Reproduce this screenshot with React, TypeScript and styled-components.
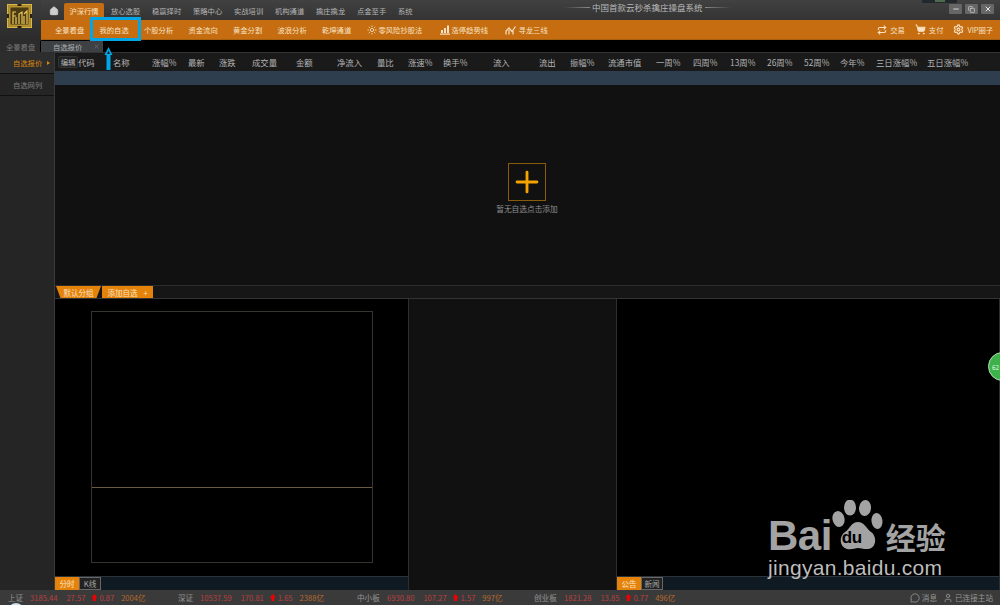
import React from "react";
import styled, { createGlobalStyle } from "styled-components";
import { Home, Sun, ShoppingCart, Settings, MessageCircle, User, Repeat, Minus, Copy, X, Plus } from "lucide-react";

const mainNav = ["放心选股", "稳赢择时", "策略中心", "实战培训", "机构通道", "擒庄擒龙", "点金至手", "系统"];
const subNav = ["全景看盘", "我的自选", "个股分析", "资金流向", "黄金分割", "波浪分析", "乾坤通道"];

const columns: [string, number][] = [
  ["代码", 35], ["名称", 39], ["涨幅%", 36], ["最新", 31], ["涨跌", 33], ["成交量", 44], ["金额", 41],
  ["净流入", 40], ["量比", 31], ["涨速%", 35], ["换手%", 50], ["流入", 46], ["流出", 31], ["振幅%", 38],
  ["流通市值", 48], ["一周%", 37], ["四周%", 37], ["13周%", 37], ["26周%", 37], ["52周%", 36], ["今年%", 36],
  ["三日涨幅%", 51], ["五日涨幅%", 50],
];

const indexes = [
  { name: "上证", width: 22, price: "3185.44", change: "27.57", pct: "0.87", amount: "2004亿", total: 170 },
  { name: "深证", width: 22, price: "10537.59", change: "170.81", pct: "1.65", amount: "2388亿", total: 179 },
  { name: "中小板", width: 30, price: "6930.80", change: "107.27", pct: "1.57", amount: "997亿", total: 177 },
  { name: "创业板", width: 30, price: "1821.28", change: "13.85", pct: "0.77", amount: "496亿", total: 150 },
];

const GlobalStyle = createGlobalStyle`
  html, body {
    margin: 0;
    padding: 0;
    background: #000;
    overflow: hidden;
  }
  * {
    box-sizing: border-box;
  }
  body {
    font-family: "Noto Sans CJK SC", "Liberation Sans", sans-serif;
  }
`;

const Page = styled.div`
  position: relative;
  width: 1000px;
  height: 605px;
  display: flex;
  flex-direction: column;
  overflow: hidden;
  background: #000;
`;

const Header = styled.header`
  display: flex;
  height: 41px;
  background: #000;
`;

const LogoCell = styled.div`
  width: 41px;
  height: 41px;
  flex: none;
  padding: 4px 0 0 7px;
  background: linear-gradient(#3d3d3d, #2b2b2b);
`;

const HeaderRight = styled.div`
  flex: 1;
  display: flex;
  flex-direction: column;
`;

const TitleBar = styled.div`
  position: relative;
  height: 20px;
  display: flex;
  align-items: flex-end;
  padding-left: 3px;
  background: linear-gradient(#414141, #333);
`;

const HomeTab = styled.div`
  width: 20px;
  height: 19px;
  display: flex;
  align-items: center;
  justify-content: center;
  color: #cfcfcf;
`;

const MainItem = styled.div<{ $active?: boolean }>`
  width: ${(p) => (p.$active ? "40px" : "41px")};
  height: 17px;
  margin-right: ${(p) => (p.$active ? "7px" : "0")};
  padding-bottom: 2px;
  display: flex;
  align-items: center;
  justify-content: ${(p) => (p.$active ? "center" : "flex-start")};
  font-size: 7.3px;
  color: ${(p) => (p.$active ? "#fbe3c3" : "#b5b5b5")};
  background: ${(p) => (p.$active ? "#c56d12" : "transparent")};
  border-radius: 2px 2px 0 0;
`;

const Title = styled.div`
  position: absolute;
  left: 523px;
  top: 1px;
  display: flex;
  align-items: center;
  gap: 2px;
  font-size: 8.5px;
  color: #b9b9b9;
`;

const TitleLine = styled.span<{ $flip?: boolean }>`
  width: 26px;
  height: 1px;
  background: linear-gradient(${(p) => (p.$flip ? "to left" : "to right")}, transparent, #8a8a8a);
`;

const WindowButtons = styled.div`
  position: absolute;
  right: 6px;
  top: 4px;
  display: flex;
  gap: 3px;
`;

const WindowButton = styled.div`
  width: 13px;
  height: 10px;
  display: flex;
  align-items: center;
  justify-content: center;
  border-radius: 1px;
  color: #e8e8e8;
  background: #666;
`;

const TopNotch = styled.div`
  position: absolute;
  right: 2px;
  top: 0;
  width: 35px;
  height: 3px;
  margin-right: 41px;
  display: flex;
  justify-content: center;
  background: #23282c;
`;

const NotchLight = styled.span`
  width: 10px;
  height: 2px;
  background: #4d6b4d;
`;

const OrangeWrap = styled.div`
  height: 20px;
  display: flex;
  align-items: center;
  background: #c56d10;
  padding-left: 14px;
  border-bottom: 1px solid #a8610f;
`;

const SubItem = styled.div`
  width: 44.5px;
  font-size: 7.3px;
  color: #f8e2c3;
  white-space: nowrap;
`;

const IconItem = styled.div<{ $width?: number }>`
  width: ${(p) => p.$width ?? 60}px;
  display: flex;
  align-items: center;
  gap: 2px;
  font-size: 7.3px;
  color: #f8e2c3;
  white-space: nowrap;
`;

const ToolRight = styled.div`
  margin-left: auto;
  padding-right: 7px;
  display: flex;
  align-items: center;
  gap: 10px;
`;

const ToolItem = styled.div`
  display: flex;
  align-items: center;
  gap: 3px;
  font-size: 7.3px;
  color: #f8e2c3;
`;

const TabRow = styled.div`
  height: 11px;
  display: flex;
  gap: 1px;
  background: #000;
`;

const Tab = styled.div<{ $active?: boolean }>`
  position: relative;
  width: ${(p) => (p.$active ? "62px" : "40px")};
  height: 11px;
  display: flex;
  align-items: center;
  padding-left: ${(p) => (p.$active ? "12px" : "6px")};
  font-size: 7.3px;
  color: ${(p) => (p.$active ? "#b0b0b0" : "#7a7a7a")};
  background: ${(p) => (p.$active ? "#3d4144" : "#2c2c2c")};
`;

const TabClose = styled.span`
  position: absolute;
  right: 3px;
  top: 2px;
  display: flex;
  color: #777;
`;

const Body = styled.div`
  flex: 1;
  min-height: 0;
  display: flex;
`;

const Sidebar = styled.aside`
  width: 55px;
  flex: none;
  background: #252525;
  border-right: 1px solid #3a3a3a;
`;

const SideItem = styled.div<{ $active?: boolean }>`
  height: 22px;
  display: flex;
  align-items: center;
  padding-left: 13px;
  gap: 5px;
  font-size: 7.3px;
  color: ${(p) => (p.$active ? "#d9860f" : "#7d7d7d")};
  background: ${(p) => (p.$active ? "#2d2d2d" : "transparent")};
  border-bottom: 1px solid #111;
`;

const SideMark = styled.span`
  width: 0;
  height: 0;
  border-left: 3px solid #d9860f;
  border-top: 2px solid transparent;
  border-bottom: 2px solid transparent;
`;

const Content = styled.main`
  flex: 1;
  min-width: 0;
  display: flex;
  flex-direction: column;
`;

const TableHead = styled.div`
  height: 19px;
  display: flex;
  align-items: center;
  background: #1a1a1a;
  border-top: 1px solid #333;
`;

const EditButton = styled.div`
  width: 20px;
  height: 12px;
  margin-left: 3px;
  display: flex;
  align-items: center;
  justify-content: center;
  flex: none;
  font-size: 7.3px;
  color: #b8b8b8;
  background: #222;
  border: 1px solid #333;
  border-radius: 2px;
`;

const HeadCell = styled.div<{ $width: number }>`
  width: ${(p) => p.$width}px;
  flex: none;
  font-size: 8.4px;
  color: #b4b4b4;
  white-space: nowrap;
`;

const SelectedRow = styled.div`
  height: 14px;
  background: #2e3e4e;
`;

const EmptyArea = styled.div`
  height: 200px;
  padding: 78px 1px 0 0;
  display: flex;
  flex-direction: column;
  align-items: center;
  gap: 2px;
  background: #111;
`;

const AddBox = styled.div`
  width: 38px;
  height: 38px;
  display: flex;
  align-items: center;
  justify-content: center;
  color: #f5a300;
  border: 1px solid #8a5c0a;
`;

const EmptyText = styled.div`
  font-size: 7.7px;
  color: #8f8f8f;
`;

const GroupBar = styled.div`
  height: 14px;
  display: flex;
  gap: 1px;
  padding-left: 1px;
  background: #161616;
  border-top: 1px solid #2c2c2c;
  border-bottom: 1px solid #333;
`;

const GroupTab = styled.div`
  width: 45px;
  height: 12px;
  display: flex;
  align-items: center;
  justify-content: center;
  font-size: 7.5px;
  color: #f9e3c4;
  background: #e5820a;
  clip-path: polygon(0 0, 100% 0, 90% 100%, 10% 100%);
`;

const AddTab = styled.div`
  width: 51px;
  height: 12px;
  display: flex;
  align-items: center;
  justify-content: center;
  gap: 6px;
  font-size: 7.5px;
  color: #f9e3c4;
  background: #e5820a;
`;

const Panels = styled.div`
  flex: 1;
  min-height: 0;
  display: flex;
`;

const Panel = styled.section<{ $width: number }>`
  width: ${(p) => p.$width}px;
  flex: none;
  display: flex;
  flex-direction: column;
  border-right: 1px solid #2a2f33;
`;

const MiddlePanel = styled.section`
  width: 208px;
  flex: none;
  background: #111;
  border-right: 1px solid #2a2f33;
`;

const PanelBody = styled.div`
  flex: 1;
  min-height: 0;
  background: #000;
`;

const ChartArea = styled(PanelBody)`
  padding: 12px 35px 13px 36px;
`;

const ChartFrame = styled.div`
  height: 100%;
  display: flex;
  flex-direction: column;
  border: 1px solid #37332e;
`;

const ChartTop = styled.div`
  height: 176px;
  border-bottom: 1px solid #6a5a40;
`;

const PanelTabs = styled.div`
  height: 14px;
  display: flex;
  background: #0f1a22;
  border-top: 1px solid #2b3238;
`;

const PanelTab = styled.div<{ $active?: boolean }>`
  width: ${(p) => (p.$active ? "24px" : "22px")};
  height: 13px;
  display: flex;
  align-items: center;
  justify-content: center;
  font-size: 7.6px;
  color: ${(p) => (p.$active ? "#fbe6c8" : "#a5a5a5")};
  background: ${(p) => (p.$active ? "#e5820a" : "#222")};
  border: ${(p) => (p.$active ? "none" : "1px solid #666")};
`;

const StatusBar = styled.footer`
  height: 15px;
  display: flex;
  align-items: center;
  padding-left: 8px;
  font-size: 7.6px;
  background: #3a3a3a;
`;

const IndexGroup = styled.div<{ $width: number }>`
  width: ${(p) => p.$width}px;
  flex: none;
  display: flex;
  align-items: center;
  white-space: nowrap;
`;

const IndexName = styled.span<{ $width: number }>`
  width: ${(p) => p.$width}px;
  flex: none;
  color: #959595;
`;

const Red = styled.span<{ $gap: number }>`
  margin-right: ${(p) => p.$gap}px;
  color: #b93f3f;
`;

const Pct = styled.span`
  display: flex;
  align-items: center;
  gap: 2px;
  margin-right: 7px;
  color: #b93f3f;
`;

const UpArrow = styled.span`
  width: 6px;
  height: 7px;
  background: #f00000;
  clip-path: polygon(50% 0, 100% 50%, 75% 50%, 75% 100%, 25% 100%, 25% 50%, 0 50%);
`;

const Amount = styled.span`
  color: #b5682c;
`;

const StatusRight = styled.div`
  margin-left: auto;
  padding-right: 7px;
  display: flex;
  align-items: center;
  gap: 6px;
  color: #959595;
`;

const StatusItem = styled.span`
  display: flex;
  align-items: center;
  gap: 2px;
`;

const Highlight = styled.div`
  position: absolute;
  left: 90px;
  top: 17px;
  width: 51px;
  height: 24px;
  border: 3px solid #00a6e6;
`;

const ArrowMark = styled.svg`
  position: absolute;
  left: 103px;
  top: 46px;
`;

const Bubble = styled.div`
  position: absolute;
  left: 988px;
  top: 352px;
  width: 29px;
  height: 29px;
  padding-left: 3px;
  display: flex;
  align-items: center;
  font-size: 6.5px;
  color: #dff5df;
  background: #3eb24a;
  border: 1px solid #b6dcb6;
  border-radius: 50%;
`;

const Cursor = styled.div`
  position: absolute;
  left: 8px;
  top: 603px;
  width: 16px;
  height: 16px;
  background: #cfe0ea;
  border-radius: 50%;
`;

const Watermark = styled.div`
  position: absolute;
  left: 768px;
  top: 500px;
  width: 190px;
  color: #a3a3a3;
  pointer-events: none;
`;

const WatermarkTop = styled.div`
  display: flex;
  align-items: flex-end;
  height: 53px;
  font-family: "Liberation Sans", sans-serif;
  font-weight: 700;
`;

const BaiText = styled.span`
  font-size: 42px;
  line-height: 34px;
  letter-spacing: -0.5px;
`;

const PawWrap = styled.span`
  position: relative;
  width: 52px;
  height: 53px;
  flex: none;
`;

const DuText = styled.span`
  position: absolute;
  left: 10px;
  top: 29px;
  font-size: 17px;
  line-height: 18px;
  letter-spacing: -0.5px;
  color: #000;
`;

const JingText = styled.span`
  font-family: "Noto Sans CJK SC", sans-serif;
  font-size: 30px;
  line-height: 34px;
  font-weight: 700;
  margin-left: 2px;
  white-space: nowrap;
`;

const WatermarkUrl = styled.div`
  margin-top: 3px;
  font-family: "Liberation Sans", sans-serif;
  font-size: 21px;
  line-height: 24px;
  letter-spacing: 0.3px;
  color: #bdbdbd;
`;

const Logo = () => (
  <svg width="25" height="24" viewBox="0 0 25 24">
    <rect x="0.5" y="0.5" width="24" height="23" fill="#a88a2a" stroke="#d8b648" />
    <rect x="3" y="3" width="19" height="18" fill="#4a3b14" stroke="#c9a43c" strokeWidth="0.8" />
    <path d="M6 20V8h3M6 12h3M9 20v-7M12 20V10l3-2v12M17 20v-8M20 20V7l-3 3" fill="none" stroke="#ecc95a" strokeWidth="1.2" />
    <rect x="10.5" y="0" width="4" height="2" fill="#2a2110" />
    <rect x="10.5" y="22" width="4" height="2" fill="#2a2110" />
    <rect x="0" y="10" width="2" height="4" fill="#2a2110" />
    <rect x="23" y="10" width="2" height="4" fill="#2a2110" />
  </svg>
);

const BarsIcon = () => (
  <svg width="10" height="10" viewBox="0 0 10 10" fill="#f8e2c3">
    <rect x="0" y="8.5" width="10" height="1.2" />
    <rect x="1" y="5" width="2" height="3" />
    <rect x="4" y="3" width="2" height="5" />
    <rect x="7" y="0.5" width="2" height="7.5" />
  </svg>
);

const TrendIcon = () => (
  <svg width="12" height="10" viewBox="0 0 12 10" fill="none" stroke="#f8e2c3" strokeWidth="1.2">
    <path d="M1 9.5V6l3-3 3 3.5L10.5 1.5" />
    <path d="M4 9.5V5M8 9.5V6" />
  </svg>
);

const Paw = () => (
  <svg width="52" height="53" viewBox="0 0 52 53" fill="#a3a3a3">
    <ellipse cx="6.5" cy="19" rx="6" ry="8" transform="rotate(-12 6.5 19)" />
    <ellipse cx="18" cy="7.5" rx="6" ry="8" />
    <ellipse cx="33" cy="8" rx="6" ry="8" transform="rotate(6 33 8)" />
    <ellipse cx="45" cy="21" rx="5.5" ry="8" transform="rotate(-8 45 21)" />
    <path d="M26 22c6 0 8 6 13 10 6 4 6 16-3 17-4 .5-7-1-10-1s-6 2-11 1c-8-2-8-13-2-17 5-3 6-10 13-10z" />
  </svg>
);

export default function App() {
  return (
    <Page>
      <GlobalStyle />
      <Header>
        <LogoCell>
          <Logo />
        </LogoCell>
        <HeaderRight>
          <TitleBar>
            <HomeTab>
              <Home size={10} fill="#cfcfcf" strokeWidth={1.5} />
            </HomeTab>
            <MainItem $active>沪深行情</MainItem>
            {mainNav.map((item) => (
              <MainItem key={item}>{item}</MainItem>
            ))}
            <Title>
              <TitleLine />
              中国首款云秒杀擒庄操盘系统
              <TitleLine $flip />
            </Title>
            <TopNotch>
              <NotchLight />
            </TopNotch>
            <WindowButtons>
              <WindowButton>
                <Minus size={8} strokeWidth={2.5} />
              </WindowButton>
              <WindowButton>
                <Copy size={7} strokeWidth={2} />
              </WindowButton>
              <WindowButton>
                <X size={8} strokeWidth={3} />
              </WindowButton>
            </WindowButtons>
          </TitleBar>
          <OrangeWrap>
            {subNav.map((item) => (
              <SubItem key={item}>{item}</SubItem>
            ))}
            <IconItem $width={73}>
              <Sun size={10} />
              零风险抄股法
            </IconItem>
            <IconItem $width={65}>
              <BarsIcon />
              涨停趋势线
            </IconItem>
            <IconItem $width={60}>
              <TrendIcon />
              寻龙三线
            </IconItem>
            <ToolRight>
              <ToolItem>
                <Repeat size={10} strokeWidth={2.5} />
                交易
              </ToolItem>
              <ToolItem>
                <ShoppingCart size={11} fill="#f8e2c3" />
                支付
              </ToolItem>
              <ToolItem>
                <Settings size={11} strokeWidth={2.5} />
                VIP圈子
              </ToolItem>
            </ToolRight>
          </OrangeWrap>
        </HeaderRight>
      </Header>
      <TabRow>
        <Tab>全景看盘</Tab>
        <Tab $active>
          自选报价
          <TabClose>
            <X size={7} />
          </TabClose>
        </Tab>
      </TabRow>
      <Body>
        <Sidebar>
          <SideItem $active>
            自选报价
            <SideMark />
          </SideItem>
          <SideItem>自选网列</SideItem>
        </Sidebar>
        <Content>
          <TableHead>
            <EditButton>编辑</EditButton>
            {columns.map(([label, width]) => (
              <HeadCell key={label} $width={width}>
                {label}
              </HeadCell>
            ))}
          </TableHead>
          <SelectedRow />
          <EmptyArea>
            <AddBox>
              <Plus size={34} strokeWidth={2} />
            </AddBox>
            <EmptyText>暂无自选点击添加</EmptyText>
          </EmptyArea>
          <GroupBar>
            <GroupTab>默认分组</GroupTab>
            <AddTab>
              添加自选
              <span>+</span>
            </AddTab>
          </GroupBar>
          <Panels>
            <Panel $width={354}>
              <ChartArea>
                <ChartFrame>
                  <ChartTop />
                </ChartFrame>
              </ChartArea>
              <PanelTabs>
                <PanelTab $active>分时</PanelTab>
                <PanelTab>K线</PanelTab>
              </PanelTabs>
            </Panel>
            <MiddlePanel />
            <Panel $width={383}>
              <PanelBody />
              <PanelTabs>
                <PanelTab $active>公告</PanelTab>
                <PanelTab>新闻</PanelTab>
              </PanelTabs>
            </Panel>
          </Panels>
        </Content>
      </Body>
      <StatusBar>
        {indexes.map((idx) => (
          <IndexGroup key={idx.name} $width={idx.total}>
            <IndexName $width={idx.width}>{idx.name}</IndexName>
            <Red $gap={9}>{idx.price}</Red>
            <Red $gap={6}>{idx.change}</Red>
            <Pct>
              <UpArrow />
              {idx.pct}
            </Pct>
            <Amount>{idx.amount}</Amount>
          </IndexGroup>
        ))}
        <StatusRight>
          <StatusItem>
            <MessageCircle size={10} />
            消息
          </StatusItem>
          <StatusItem>
            <User size={10} />
            已连接主站
          </StatusItem>
        </StatusRight>
      </StatusBar>
      <Highlight />
      <ArrowMark width="11" height="25" viewBox="0 0 11 25">
        <path d="M5.5 1L9.5 9H7.5V24H3.5V9H1.5z" fill="#00a6e6" />
        <path d="M5.5 4.5L7 8H4z" fill="#10222c" />
      </ArrowMark>
      <Bubble>62</Bubble>
      <Cursor />
      <Watermark>
        <WatermarkTop>
          <BaiText>Bai</BaiText>
          <PawWrap>
            <Paw />
            <DuText>du</DuText>
          </PawWrap>
          <JingText>经验</JingText>
        </WatermarkTop>
        <WatermarkUrl>jingyan.baidu.com</WatermarkUrl>
      </Watermark>
    </Page>
  );
}
